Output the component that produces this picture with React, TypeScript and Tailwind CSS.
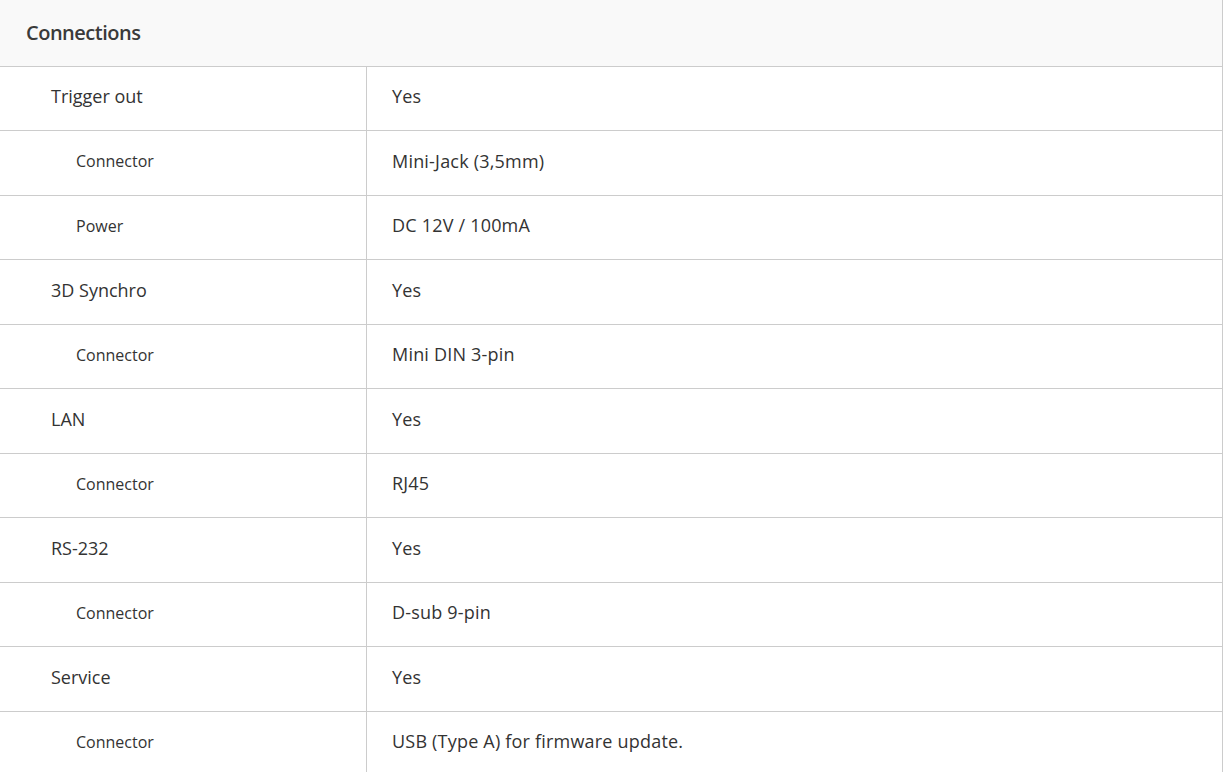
import React from 'react';

type Row = { label: string; value: string; sub?: boolean };

const rows: Row[] = [
  { label: 'Trigger out', value: 'Yes' },
  { label: 'Connector', value: 'Mini-Jack (3,5mm)', sub: true },
  { label: 'Power', value: 'DC 12V / 100mA', sub: true },
  { label: '3D Synchro', value: 'Yes' },
  { label: 'Connector', value: 'Mini DIN 3-pin', sub: true },
  { label: 'LAN', value: 'Yes' },
  { label: 'Connector', value: 'RJ45', sub: true },
  { label: 'RS-232', value: 'Yes' },
  { label: 'Connector', value: 'D-sub 9-pin', sub: true },
  { label: 'Service', value: 'Yes' },
  { label: 'Connector', value: 'USB (Type A) for firmware update.', sub: true },
];

const App: React.FC = () => {
  return (
    <div className="w-[1223px] h-[772px] overflow-hidden bg-white text-[#333] font-['Open_Sans',sans-serif] border-r border-[#ccc]">
      <div className="h-[66.5px] bg-[#f9f9f9] border-b border-[#ccc] flex items-center pl-[26px]">
        <h2 className="text-[20px] font-semibold tracking-[-0.5px] text-[#3a3a3a]">Connections</h2>
      </div>
      {rows.map((row, i) => (
        <div key={i} className="flex h-[64.5px] border-b border-[#ccc]">
          <div
            className={
              'w-[367px] shrink-0 border-r border-[#ccc] flex items-center pb-[3px] ' +
              (row.sub ? 'pl-[76px] text-[16px]' : 'pl-[51px] text-[18px]')
            }
          >
            {row.label}
          </div>
          <div className="flex-1 flex items-center pl-[25px] pb-[3px] text-[18px] tracking-[0.2px]">{row.value}</div>
        </div>
      ))}
    </div>
  );
};

export default App;
